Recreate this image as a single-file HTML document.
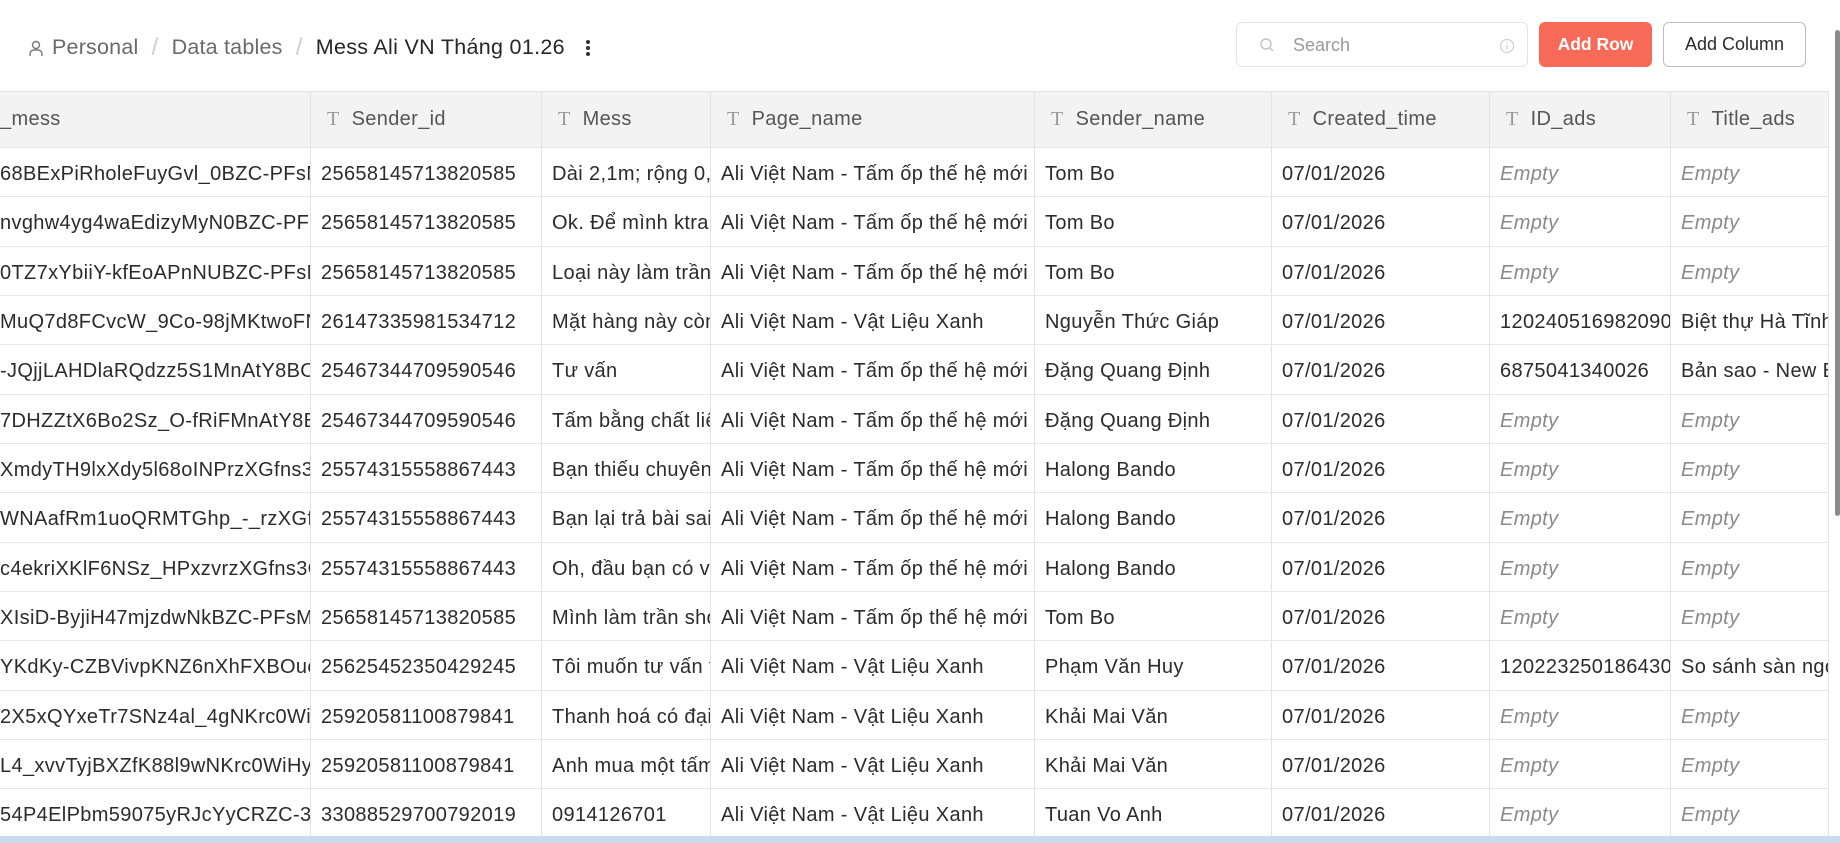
<!DOCTYPE html>
<html><head><meta charset="utf-8"><style>
*{box-sizing:border-box;margin:0;padding:0}
body{width:1840px;height:843px;overflow:hidden;background:#fff;font-family:"Liberation Sans","Noto Sans CJK SC",sans-serif;color:#2b2b2b;position:relative}
.bc{position:absolute;top:33px;left:28px;font-size:21.5px;letter-spacing:0.2px;color:#6a6a6a;display:flex;align-items:center;white-space:nowrap}
.bc .sep{color:#d0d0d0;margin:0 13px;font-size:25px}
.bc .cur{color:#262626;letter-spacing:0.3px}
.search{position:absolute;left:1236px;top:22px;width:292px;height:45px;border:1px solid #e4e4e4;border-radius:6px}
.search span{position:absolute;left:56px;top:12px;font-size:18px;color:#9a9a9a}
.btn{position:absolute;top:22px;height:45px;border-radius:6px;font-size:17.5px;display:flex;align-items:center;justify-content:center;font-weight:bold}
.add{left:1539px;width:113px;background:#f76a58;color:#fff}
.addc{left:1663px;width:143px;border:1px solid #bdbdbd;color:#2b2b2b;font-weight:normal;font-size:18px}
.tbl{position:absolute;left:0;top:91px;width:1829px;border-top:1px solid #e2e2e2}
.r{display:flex;height:49.35px;border-bottom:1px solid #e6e6e6}
.r.h{height:56px;background:#f3f3f3;color:#555}
.c{border-right:1px solid #e3e3e3;overflow:hidden;white-space:nowrap;font-size:20px;letter-spacing:0.35px;line-height:52px;padding-left:10px}
.h .c{line-height:55px;padding-left:16px}
.c:first-child{padding-left:0}
.t{font-family:"Liberation Serif",serif;color:#999;margin-right:12px;font-size:20px}
.e{font-style:italic;color:#8a8a8a}
.w0{width:311px}.w1{width:231px}.w2{width:169px}.w3{width:324px}.w4{width:237px}.w5{width:218px}.w6{width:181px}.w7{width:158px}
.strip{position:absolute;left:0;top:836px;width:1840px;height:7px;background:#c9dcec}
.sb{position:absolute;left:1835px;top:30px;width:5px;height:486px;background:#8a8a8a;border-radius:3px}
</style></head><body>
<div class="bc">
<svg width="16" height="18" viewBox="0 0 16 18" style="margin-right:8px"><circle cx="8" cy="6" r="3.5" fill="none" stroke="#777" stroke-width="1.4"/><path d="M2 17v-2a4 4 0 0 1 4-4h4a4 4 0 0 1 4 4v2" fill="none" stroke="#777" stroke-width="1.4"/></svg>
<span>Personal</span><span class="sep">/</span><span>Data tables</span><span class="sep">/</span><span class="cur">Mess Ali VN Tháng 01.26</span>
<svg width="6" height="20" viewBox="0 0 6 20" style="margin-left:20px"><circle cx="3" cy="4" r="2" fill="#333"/><circle cx="3" cy="10" r="2" fill="#333"/><circle cx="3" cy="16" r="2" fill="#333"/></svg>
</div>
<div class="search"><svg width="16" height="16" viewBox="0 0 16 16" style="position:absolute;left:22px;top:14px"><circle cx="7" cy="7" r="5" fill="none" stroke="#c4c4c4" stroke-width="1.4"/><path d="M11 11l3 3" stroke="#c4c4c4" stroke-width="1.4"/></svg><span>Search</span><svg width="16" height="16" viewBox="0 0 16 16" style="position:absolute;left:262px;top:15px"><circle cx="8" cy="8" r="6.5" fill="none" stroke="#d0d0d0" stroke-width="1.2"/><path d="M8 7v4.5M8 4.5v1" stroke="#d0d0d0" stroke-width="1.3"/></svg></div>
<div class="btn add">Add Row</div>
<div class="btn addc">Add Column</div>
<div class="tbl">
<div class="r h"><div class="c w0">_mess</div><div class="c w1"><span class="t">T</span>Sender_id</div><div class="c w2"><span class="t">T</span>Mess</div><div class="c w3"><span class="t">T</span>Page_name</div><div class="c w4"><span class="t">T</span>Sender_name</div><div class="c w5"><span class="t">T</span>Created_time</div><div class="c w6"><span class="t">T</span>ID_ads</div><div class="c w7"><span class="t">T</span>Title_ads</div></div>
<div class="r"><div class="c w0">68BExPiRholeFuyGvl_0BZC-PFsM</div><div class="c w1">25658145713820585</div><div class="c w2">Dài 2,1m; rộng 0,6</div><div class="c w3">Ali Việt Nam - Tấm ốp thế hệ mới</div><div class="c w4">Tom Bo</div><div class="c w5">07/01/2026</div><div class="c w6 e">Empty</div><div class="c w7 e">Empty</div></div>
<div class="r"><div class="c w0">nvghw4yg4waEdizyMyN0BZC-PF</div><div class="c w1">25658145713820585</div><div class="c w2">Ok. Để mình ktra</div><div class="c w3">Ali Việt Nam - Tấm ốp thế hệ mới</div><div class="c w4">Tom Bo</div><div class="c w5">07/01/2026</div><div class="c w6 e">Empty</div><div class="c w7 e">Empty</div></div>
<div class="r"><div class="c w0">0TZ7xYbiiY-kfEoAPnNUBZC-PFsM</div><div class="c w1">25658145713820585</div><div class="c w2">Loại này làm trần</div><div class="c w3">Ali Việt Nam - Tấm ốp thế hệ mới</div><div class="c w4">Tom Bo</div><div class="c w5">07/01/2026</div><div class="c w6 e">Empty</div><div class="c w7 e">Empty</div></div>
<div class="r"><div class="c w0">MuQ7d8FCvcW_9Co-98jMKtwoFN</div><div class="c w1">26147335981534712</div><div class="c w2">Mặt hàng này còn</div><div class="c w3">Ali Việt Nam - Vật Liệu Xanh</div><div class="c w4">Nguyễn Thức Giáp</div><div class="c w5">07/01/2026</div><div class="c w6">120240516982090</div><div class="c w7">Biệt thự Hà Tĩnh</div></div>
<div class="r"><div class="c w0">-JQjjLAHDlaRQdzz5S1MnAtY8BOL</div><div class="c w1">25467344709590546</div><div class="c w2">Tư vấn</div><div class="c w3">Ali Việt Nam - Tấm ốp thế hệ mới</div><div class="c w4">Đặng Quang Định</div><div class="c w5">07/01/2026</div><div class="c w6">6875041340026</div><div class="c w7">Bản sao - New B</div></div>
<div class="r"><div class="c w0">7DHZZtX6Bo2Sz_O-fRiFMnAtY8B</div><div class="c w1">25467344709590546</div><div class="c w2">Tấm bằng chất liệu</div><div class="c w3">Ali Việt Nam - Tấm ốp thế hệ mới</div><div class="c w4">Đặng Quang Định</div><div class="c w5">07/01/2026</div><div class="c w6 e">Empty</div><div class="c w7 e">Empty</div></div>
<div class="r"><div class="c w0">XmdyTH9lxXdy5l68oINPrzXGfns3</div><div class="c w1">25574315558867443</div><div class="c w2">Bạn thiếu chuyên</div><div class="c w3">Ali Việt Nam - Tấm ốp thế hệ mới</div><div class="c w4">Halong Bando</div><div class="c w5">07/01/2026</div><div class="c w6 e">Empty</div><div class="c w7 e">Empty</div></div>
<div class="r"><div class="c w0">WNAafRm1uoQRMTGhp_-_rzXGfn</div><div class="c w1">25574315558867443</div><div class="c w2">Bạn lại trả bài sai</div><div class="c w3">Ali Việt Nam - Tấm ốp thế hệ mới</div><div class="c w4">Halong Bando</div><div class="c w5">07/01/2026</div><div class="c w6 e">Empty</div><div class="c w7 e">Empty</div></div>
<div class="r"><div class="c w0">c4ekriXKlF6NSz_HPxzvrzXGfns3C</div><div class="c w1">25574315558867443</div><div class="c w2">Oh, đầu bạn có v</div><div class="c w3">Ali Việt Nam - Tấm ốp thế hệ mới</div><div class="c w4">Halong Bando</div><div class="c w5">07/01/2026</div><div class="c w6 e">Empty</div><div class="c w7 e">Empty</div></div>
<div class="r"><div class="c w0">XIsiD-ByjiH47mjzdwNkBZC-PFsM</div><div class="c w1">25658145713820585</div><div class="c w2">Mình làm trần sho</div><div class="c w3">Ali Việt Nam - Tấm ốp thế hệ mới</div><div class="c w4">Tom Bo</div><div class="c w5">07/01/2026</div><div class="c w6 e">Empty</div><div class="c w7 e">Empty</div></div>
<div class="r"><div class="c w0">YKdKy-CZBVivpKNZ6nXhFXBOueC</div><div class="c w1">25625452350429245</div><div class="c w2">Tôi muốn tư vấn t</div><div class="c w3">Ali Việt Nam - Vật Liệu Xanh</div><div class="c w4">Phạm Văn Huy</div><div class="c w5">07/01/2026</div><div class="c w6">120223250186430</div><div class="c w7">So sánh sàn ngo</div></div>
<div class="r"><div class="c w0">2X5xQYxeTr7SNz4al_4gNKrc0WiH</div><div class="c w1">25920581100879841</div><div class="c w2">Thanh hoá có đại</div><div class="c w3">Ali Việt Nam - Vật Liệu Xanh</div><div class="c w4">Khải Mai Văn</div><div class="c w5">07/01/2026</div><div class="c w6 e">Empty</div><div class="c w7 e">Empty</div></div>
<div class="r"><div class="c w0">L4_xvvTyjBXZfK88l9wNKrc0WiHy</div><div class="c w1">25920581100879841</div><div class="c w2">Anh mua một tấm</div><div class="c w3">Ali Việt Nam - Vật Liệu Xanh</div><div class="c w4">Khải Mai Văn</div><div class="c w5">07/01/2026</div><div class="c w6 e">Empty</div><div class="c w7 e">Empty</div></div>
<div class="r"><div class="c w0">54P4ElPbm59075yRJcYyCRZC-3K</div><div class="c w1">33088529700792019</div><div class="c w2">0914126701</div><div class="c w3">Ali Việt Nam - Vật Liệu Xanh</div><div class="c w4">Tuan Vo Anh</div><div class="c w5">07/01/2026</div><div class="c w6 e">Empty</div><div class="c w7 e">Empty</div></div>
</div>
<div class="sb"></div>
<div class="strip"></div>
</body></html>
